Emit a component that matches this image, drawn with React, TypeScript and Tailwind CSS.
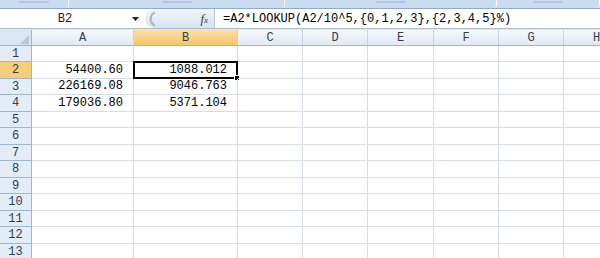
import { Fragment } from "react";

const MONO = "font-['Liberation_Mono','DejaVu_Sans_Mono',monospace]";

const COLS = [
  { label: "A", w: "w-[102px]" },
  { label: "B", w: "w-[104px]" },
  { label: "C", w: "w-[65px]" },
  { label: "D", w: "w-[65px]" },
  { label: "E", w: "w-[66px]" },
  { label: "F", w: "w-[65px]" },
  { label: "G", w: "w-[65px]" },
  { label: "H", w: "w-[66px]" },
];

const ROW_H = ["h-[16px]", "h-[17px]"];

const DATA: Record<number, string[]> = {
  2: ["54400.60", "1088.012"],
  3: ["226169.08", "9046.763"],
  4: ["179036.80", "5371.104"],
};

// bottom edge of the ribbon groups, mostly scrolled out of view
const RibbonStrip = () => (
  <div className="flex h-[9px] bg-[#c5d7ee] border-b border-[#8eaad1] overflow-hidden">
    {["w-[69px]", "w-[216px]", "w-[212px]", "flex-1"].map((w) => (
      <div
        key={w}
        className={`${w} h-full flex justify-center border-r border-[#f4f8fd] rounded-b-[3px] bg-[#ccdcf0]`}
      >
        <div className="w-[30px] h-[2px] mt-[1px] bg-[#b4c6de] rounded-sm" />
      </div>
    ))}
  </div>
);

const FormulaBar = () => (
  <div className="flex h-[20px] bg-white border-b border-[#a9bed8]">
    <div className="w-[145px] flex items-center">
      <span className={`${MONO} text-[12px] text-[#222] w-[130px] text-center`}>B2</span>
      <svg width="7" height="4" viewBox="0 0 7 4" className="ml-[2px]">
        <path d="M0 0H7L3.5 4Z" fill="#222" />
      </svg>
    </div>
    <div className="w-[70px] flex items-center bg-gradient-to-b from-[#f3f7fc] via-[#e4ecf6] to-[#d6e2f1] rounded-l-full border-r border-[#b7c8de]">
      <svg width="12" height="18" viewBox="0 0 12 18" className="ml-[1px]">
        <path d="M9 2.5A7 7 0 0 0 9 15.5" fill="none" stroke="#b0b8c4" strokeWidth="2.2" />
      </svg>
      <span className="ml-auto mr-[6px] text-[13px] leading-none italic font-['Liberation_Serif',serif] text-[#3a3a3a]">
        f<span className="text-[9px]">x</span>
      </span>
    </div>
    <div className={`${MONO} text-[12px] text-black pl-[8px] flex items-center`}>
      =A2*LOOKUP(A2/10^5,{"{"}0,1,2,3{"}"},{"{"}2,3,4,5{"}"}%)
    </div>
  </div>
);

const App = () => {
  const rows = Array.from({ length: 13 }, (_, i) => i + 1);
  return (
    <div className="w-[600px] h-[258px] overflow-hidden bg-white">
      <RibbonStrip />
      <FormulaBar />
      <div className="h-[1px] bg-[#dbe6f4]" />
      {/* column headers */}
      <div className="flex h-[16px] border-b border-[#9eb6ce] bg-gradient-to-b from-[#f7f9fc] to-[#e1e9f4]">
        <div className="w-[32px] shrink-0 border-r border-[#9eb6ce] bg-[#dbe6f4] relative">
          <svg width="9" height="9" viewBox="0 0 9 9" className="absolute right-[2px] bottom-[1px]">
            <path d="M9 0V9H0Z" fill="#b7c9df" />
          </svg>
        </div>
        {COLS.map((c) => (
          <div
            key={c.label}
            className={`${c.w} shrink-0 border-r border-[#c5d3e6] flex items-center justify-center ${MONO} text-[12px] ${
              c.label === "B"
                ? "bg-gradient-to-b from-[#fbe0a9] to-[#f3c566] text-[#3b3b3b]"
                : "text-[#303e52]"
            }`}
          >
            {c.label}
          </div>
        ))}
      </div>
      {/* rows */}
      <div className="flex flex-col">
        {rows.map((r, i) => (
          <div key={r} className={`flex ${ROW_H[i % 2]} shrink-0`}>
            <div
              className={`w-[32px] shrink-0 border-r border-b border-[#9eb6ce] flex items-center justify-center ${MONO} text-[12px] ${
                r === 2 ? "bg-[#f6cd78] text-[#3b3b3b]" : "bg-[#e4ecf7] text-[#303e52]"
              }`}
            >
              {r}
            </div>
            {COLS.map((c, ci) => (
              <Fragment key={c.label}>
                <div
                  className={`${c.w} shrink-0 border-r border-b border-[#d6dde9] flex items-end justify-end pr-[10px] pb-[1px] ${MONO} text-[12px] leading-[14px] text-black relative`}
                >
                  {DATA[r] && ci < 2 ? DATA[r][ci] : null}
                  {r === 2 && ci === 1 && (
                    <div className="absolute -left-[1px] -top-[1px] -right-[1px] -bottom-[1px] border-2 border-black">
                      <div className="absolute -right-[4px] -bottom-[4px] w-[6px] h-[6px] bg-black border border-white" />
                    </div>
                  )}
                </div>
              </Fragment>
            ))}
          </div>
        ))}
      </div>
    </div>
  );
};

export default App;
